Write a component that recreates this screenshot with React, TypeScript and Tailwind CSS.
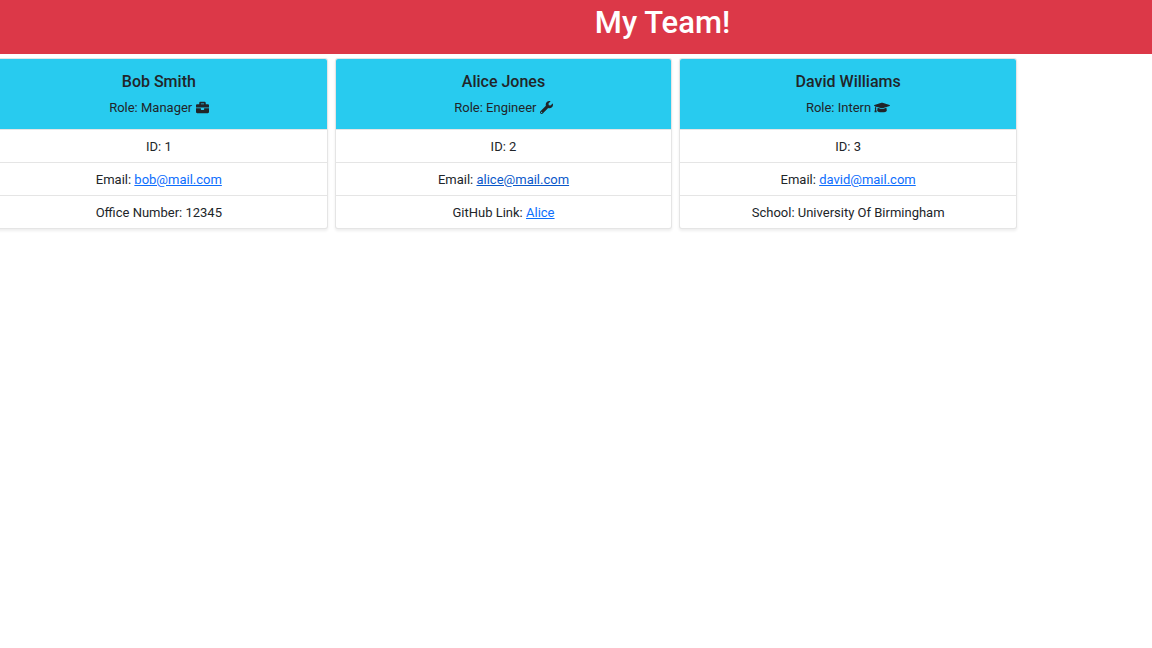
import type { ReactNode } from "react";
import { FaBriefcase, FaGraduationCap, FaWrench } from "react-icons/fa";

type Member = {
  name: string;
  role: string;
  icon: ReactNode;
  id: number;
  email: string;
  emailColor: string;
  detail: ReactNode;
};

const members: Member[] = [
  {
    name: "Bob Smith",
    role: "Manager",
    icon: <FaBriefcase className="inline h-[13px] w-[13px] align-[-2px]" />,
    id: 1,
    email: "bob@mail.com",
    emailColor: "text-[#0d6efd]",
    detail: "Office Number: 12345",
  },
  {
    name: "Alice Jones",
    role: "Engineer",
    icon: <FaWrench className="inline h-[13px] w-[13px] align-[-2px]" />,
    id: 2,
    email: "alice@mail.com",
    emailColor: "text-[#0a58ca]",
    detail: (
      <>
        GitHub Link:{" "}
        <a href="#alice" className="text-[#0d6efd] underline">
          Alice
        </a>
      </>
    ),
  },
  {
    name: "David Williams",
    role: "Intern",
    icon: <FaGraduationCap className="inline h-[13px] w-4 align-[-2px]" />,
    id: 3,
    email: "david@mail.com",
    emailColor: "text-[#0d6efd]",
    detail: "School: University Of Birmingham",
  },
];

function MemberCard({ member }: { member: Member }) {
  return (
    <article className="overflow-hidden rounded-[3px] border border-black/10 bg-white text-center shadow-[0_2px_3px_rgba(0,0,0,0.07)]">
      <div className="bg-[#28cbef] px-3 pt-[13px] pb-[11px]">
        <h2 className="text-base leading-5 font-medium">{member.name}</h2>
        <p className="mt-1.5 text-[13px] leading-5">
          Role: {member.role} {member.icon}
        </p>
      </div>
      <ul className="divide-y divide-black/10 border-t border-black/10 text-[13px] leading-4">
        <li className="px-3 pt-[9px] pb-[7px]">ID: {member.id}</li>
        <li className="px-3 pt-[9px] pb-[7px]">
          Email:{" "}
          <a href={`mailto:${member.email}`} className={`underline ${member.emailColor}`}>
            {member.email}
          </a>
        </li>
        <li className="px-3 pt-[9px] pb-[7px]">{member.detail}</li>
      </ul>
    </article>
  );
}

export default function App() {
  return (
    <div className="min-h-screen overflow-x-hidden bg-white font-['Roboto',sans-serif] text-[#212529]">
      <header className="bg-[#dc3848] pt-1 pb-3 pl-[173px] text-center text-white">
        <h1 className="text-[31px] leading-[38px] font-medium">My Team!</h1>
      </header>
      <main className="mt-1 mr-[135px] -ml-2.5 grid grid-cols-3 gap-[7px]">
        {members.map((member) => (
          <MemberCard key={member.id} member={member} />
        ))}
      </main>
    </div>
  );
}
